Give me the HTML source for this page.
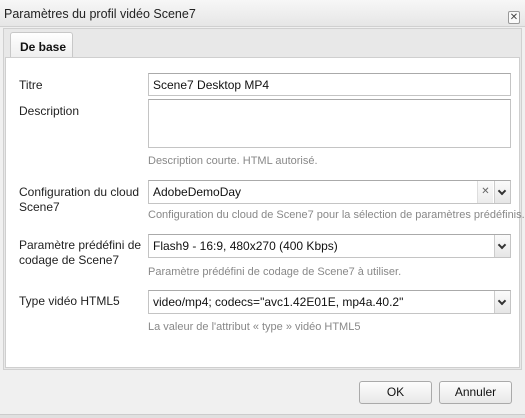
<!DOCTYPE html>
<html><head><style>
*{box-sizing:border-box;margin:0;padding:0}
body{width:525px;height:418px;background:#f0f0f0;font-family:"Liberation Sans",sans-serif;font-size:12px;color:#111;position:relative;overflow:hidden}
.a{position:absolute}
.lbl{position:absolute;left:19px;font-size:12px;line-height:15px;color:#222}
.inp{position:absolute;left:148px;width:363px;background:#fff;border:1px solid #c4c4c4;border-top-color:#aaa;font-size:12px;padding:5px 4px;line-height:13px}
.help{position:absolute;left:148px;font-size:11px;color:#888}
.dd{position:absolute;right:0;top:0;bottom:0;width:16px;border-left:1px solid #ccc;background:linear-gradient(#fbfbfb,#e6e6e6)}
.dd:after{content:"";position:absolute;left:4px;top:7px;width:4px;height:4px;border-right:2px solid #333;border-bottom:2px solid #333;transform:rotate(45deg)}
.btn{position:absolute;top:381px;height:23px;width:73px;border:1px solid #aaa;border-radius:3px;background:linear-gradient(#fdfdfd,#e8e8e8);text-align:center;line-height:21px;font-size:12px}
</style></head><body>
<div class="a" style="left:0;top:0;width:525px;height:27px;background:linear-gradient(#f7f7f7,#e6e6e6);border-bottom:1px solid #d0d0d0"></div>
<div class="a" style="left:4px;top:7px;font-size:12.5px;color:#222">Paramètres du profil vidéo Scene7</div>
<div class="a" style="left:508px;top:11px;width:12px;height:13px;border:1px solid #999;border-radius:2px;background:#fafafa;font-size:10px;line-height:11px;text-align:center;color:#444">✕</div>
<div class="a" style="left:3px;top:28px;width:519px;height:342px;background:#e8e8e8;border:1px solid #d0d0d0"></div>
<div class="a" style="left:10px;top:32px;width:63px;height:26px;background:linear-gradient(#fff,#eee);border:1px solid #c8c8c8;border-bottom:none;border-radius:3px 3px 0 0;font-weight:bold;font-size:12px;padding:7px 0 0 9px">De base</div>
<div class="a" style="left:5px;top:57px;width:515px;height:311px;background:#fff;border:1px solid #cfcfcf"></div>
<div class="lbl" style="top:78px">Titre</div>
<div class="inp" style="top:73px;height:23px">Scene7 Desktop MP4</div>
<div class="lbl" style="top:104px">Description</div>
<div class="inp" style="top:99px;height:49px"></div>
<div class="help" style="top:155px">Description courte. HTML autorisé.</div>
<div class="lbl" style="top:185px">Configuration du cloud<br>Scene7</div>
<div class="inp" style="top:180px;height:24px">AdobeDemoDay<div class="dd"></div><div style="position:absolute;right:17px;top:0;bottom:0;width:16px;border-left:1px solid #ddd;background:linear-gradient(#fbfbfb,#ececec);color:#666;text-align:center;line-height:22px;font-size:10px">✕</div></div>
<div class="help" style="top:209px">Configuration du cloud de Scene7 pour la sélection de paramètres prédéfinis.</div>
<div class="lbl" style="top:238px">Paramètre prédéfini de<br>codage de Scene7</div>
<div class="inp" style="top:234px;height:24px">Flash9 - 16:9, 480x270 (400 Kbps)<div class="dd"></div></div>
<div class="help" style="top:266px">Paramètre prédéfini de codage de Scene7 à utiliser.</div>
<div class="lbl" style="top:294px">Type vidéo HTML5</div>
<div class="inp" style="top:290px;height:24px">video/mp4; codecs="avc1.42E01E, mp4a.40.2"<div class="dd"></div></div>
<div class="help" style="top:321px">La valeur de l'attribut « type » vidéo HTML5</div>
<div class="btn" style="left:359px">OK</div>
<div class="btn" style="left:439px">Annuler</div>
<div class="a" style="left:0;top:414px;width:525px;height:4px;background:#e0e0e0;border-top:1px solid #ccc"></div>
</body></html>
